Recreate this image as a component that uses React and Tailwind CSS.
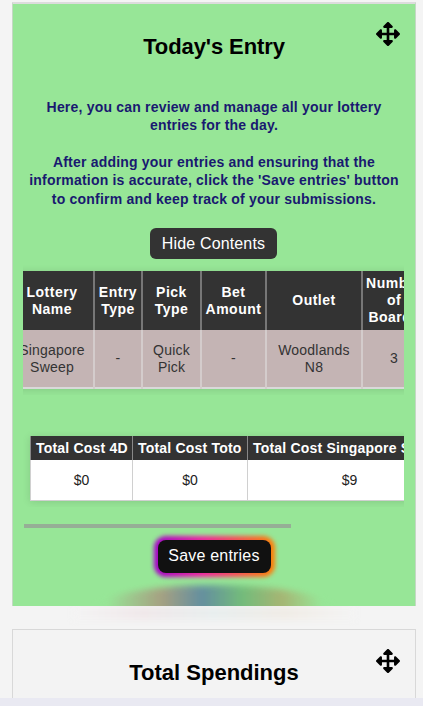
import React from 'react';
import { FaArrowsAlt } from 'react-icons/fa';

const headers = [
    { label: 'Lottery Name', width: 'w-[84px]' },
    { label: 'Entry Type', width: 'w-[48px]' },
    { label: 'Pick Type', width: 'w-[59px]' },
    { label: 'Bet Amount', width: 'w-[65px]' },
    { label: 'Outlet', width: 'w-[96px]' },
    { label: 'Number of Boards', width: 'w-[64px]' },
];

const row = ['Singapore Sweep', '-', 'Quick Pick', '-', 'Woodlands N8', '3'];

const totals = [
    { label: 'Total Cost 4D', value: '$0', width: 'w-[102px]' },
    { label: 'Total Cost Toto', value: '$0', width: 'w-[115px]' },
    { label: 'Total Cost Singapore Sweep', value: '$9', width: 'w-[204px]' },
];

function App() {
    return (
        <div className="h-[706px] overflow-hidden bg-[#f4f4f4] font-['Liberation_Sans',Arial,sans-serif] relative">
            <div className="pl-3 pr-[7px] pt-[2px]">
                <section className="relative z-10 h-[604px] bg-[#97e697] border-t-2 border-[#dcdcdc] border-x border-x-[#c4d8c4] overflow-hidden">
                    <FaArrowsAlt className="absolute right-[15px] top-[18px] text-[24px] text-black" />
                    <h2 className="pt-[28px] text-center text-[22px] leading-[30px] font-bold tracking-[-0.1px] text-black">Today's Entry</h2>

                    <div className="mt-[36px] px-[14px] text-center text-[14px] leading-[18.4px] font-bold tracking-[0.2px] text-[#191970]">
                        <p>Here, you can review and manage all your lottery entries for the day.</p>
                        <p className="mt-[18px]">After adding your entries and ensuring that the information is accurate, click the 'Save entries' button to confirm and keep track of your submissions.</p>
                    </div>

                    <div className="mt-[20px] pr-px flex justify-center">
                        <button className="h-[31px] w-[127px] rounded-md bg-[#333333] text-[16px] tracking-[0.15px] text-white">Hide Contents</button>
                    </div>

                    <div className="mt-[6px] ml-[10px] w-[381px] overflow-hidden py-[6px]">
                        <table className="-ml-[14px] w-[416px] table-fixed border-collapse text-center text-[14px] leading-[17px] shadow-[0_1px_8px_rgba(0,0,0,0.12)]">
                            <thead>
                                <tr className="h-[59px] bg-[#333333] text-white">
                                    {headers.map((h) => (
                                        <th key={h.label} className={`${h.width} border-x-2 border-[#777777] px-[3px] font-bold tracking-[0.5px]`}>{h.label}</th>
                                    ))}
                                </tr>
                            </thead>
                            <tbody>
                                <tr className="h-[58px] bg-[#c4b4b4] text-[#333333] border-b-2 border-[#d9d9d9]">
                                    {row.map((cell, i) => (
                                        <td key={i} className="border-x-2 border-[#d4cccc] px-[3px] font-normal tracking-[0.2px]">{cell}</td>
                                    ))}
                                </tr>
                            </tbody>
                        </table>
                    </div>

                    <div className="mt-[35px] ml-[10px] w-[381px] overflow-hidden py-[6px]">
                        <table className="ml-[7px] w-[421px] table-fixed border-collapse text-center text-[14px] shadow-[0_1px_8px_rgba(0,0,0,0.12)]">
                            <thead>
                                <tr className="h-[24px] bg-[#333333] text-white">
                                    {totals.map((t) => (
                                        <th key={t.label} className={`${t.width} border-x border-[#888888] whitespace-nowrap overflow-hidden px-[5px] text-left font-bold tracking-[0.2px]`}>{t.label}</th>
                                    ))}
                                </tr>
                            </thead>
                            <tbody>
                                <tr className="h-[40px] bg-white text-[#222222] border-b border-[#d0d0d0]">
                                    {totals.map((t) => (
                                        <td key={t.label} className="border-x border-[#d0d0d0] pt-[2px]">{t.value}</td>
                                    ))}
                                </tr>
                            </tbody>
                        </table>
                    </div>

                    <div className="mt-[17px] ml-[11px] h-[4px] w-[267px] bg-[#96ae96]" />

                    <div className="mt-[12px] flex justify-center">
                        <div className="relative h-[33px] w-[113px]">
                            <div className="absolute -inset-[4px] rounded-xl bg-[linear-gradient(90deg,#a000c8,#f020a0_40%,#ff8000_100%)] blur-[2px]" />
                            <button className="relative h-full w-full rounded-lg bg-[#111111] text-[16px] tracking-[0.2px] text-white">Save entries</button>
                        </div>
                    </div>

                    <div className="absolute left-[81px] top-[581px] h-[50px] w-[240px] rounded-[50%] opacity-90 bg-[linear-gradient(90deg,#97e697_5%,#a89a80_28%,#5f86a0_45%,#70b878_62%,#a8b070_78%,#97e697_95%)] blur-[3px]" />
                </section>

                <div className="mx-[60px] h-[14px] bg-[linear-gradient(90deg,#f4f4f4,#f0e8ea_25%,#e8eeee_50%,#f0ece6_75%,#f4f4f4)] blur-[3px]" />

                <section className="mt-[9px] h-[80px] border border-[#d8d8d8] bg-[#f3f3f3] relative">
                    <FaArrowsAlt className="absolute right-[15px] top-[19px] text-[24px] text-black" />
                    <h2 className="pt-[28px] text-center text-[22px] leading-[30px] font-bold text-black">Total Spendings</h2>
                </section>
            </div>
            <div className="absolute inset-x-0 bottom-0 h-[8px] bg-[#e9e9f2]" />
        </div>
    );
}

export default App;
